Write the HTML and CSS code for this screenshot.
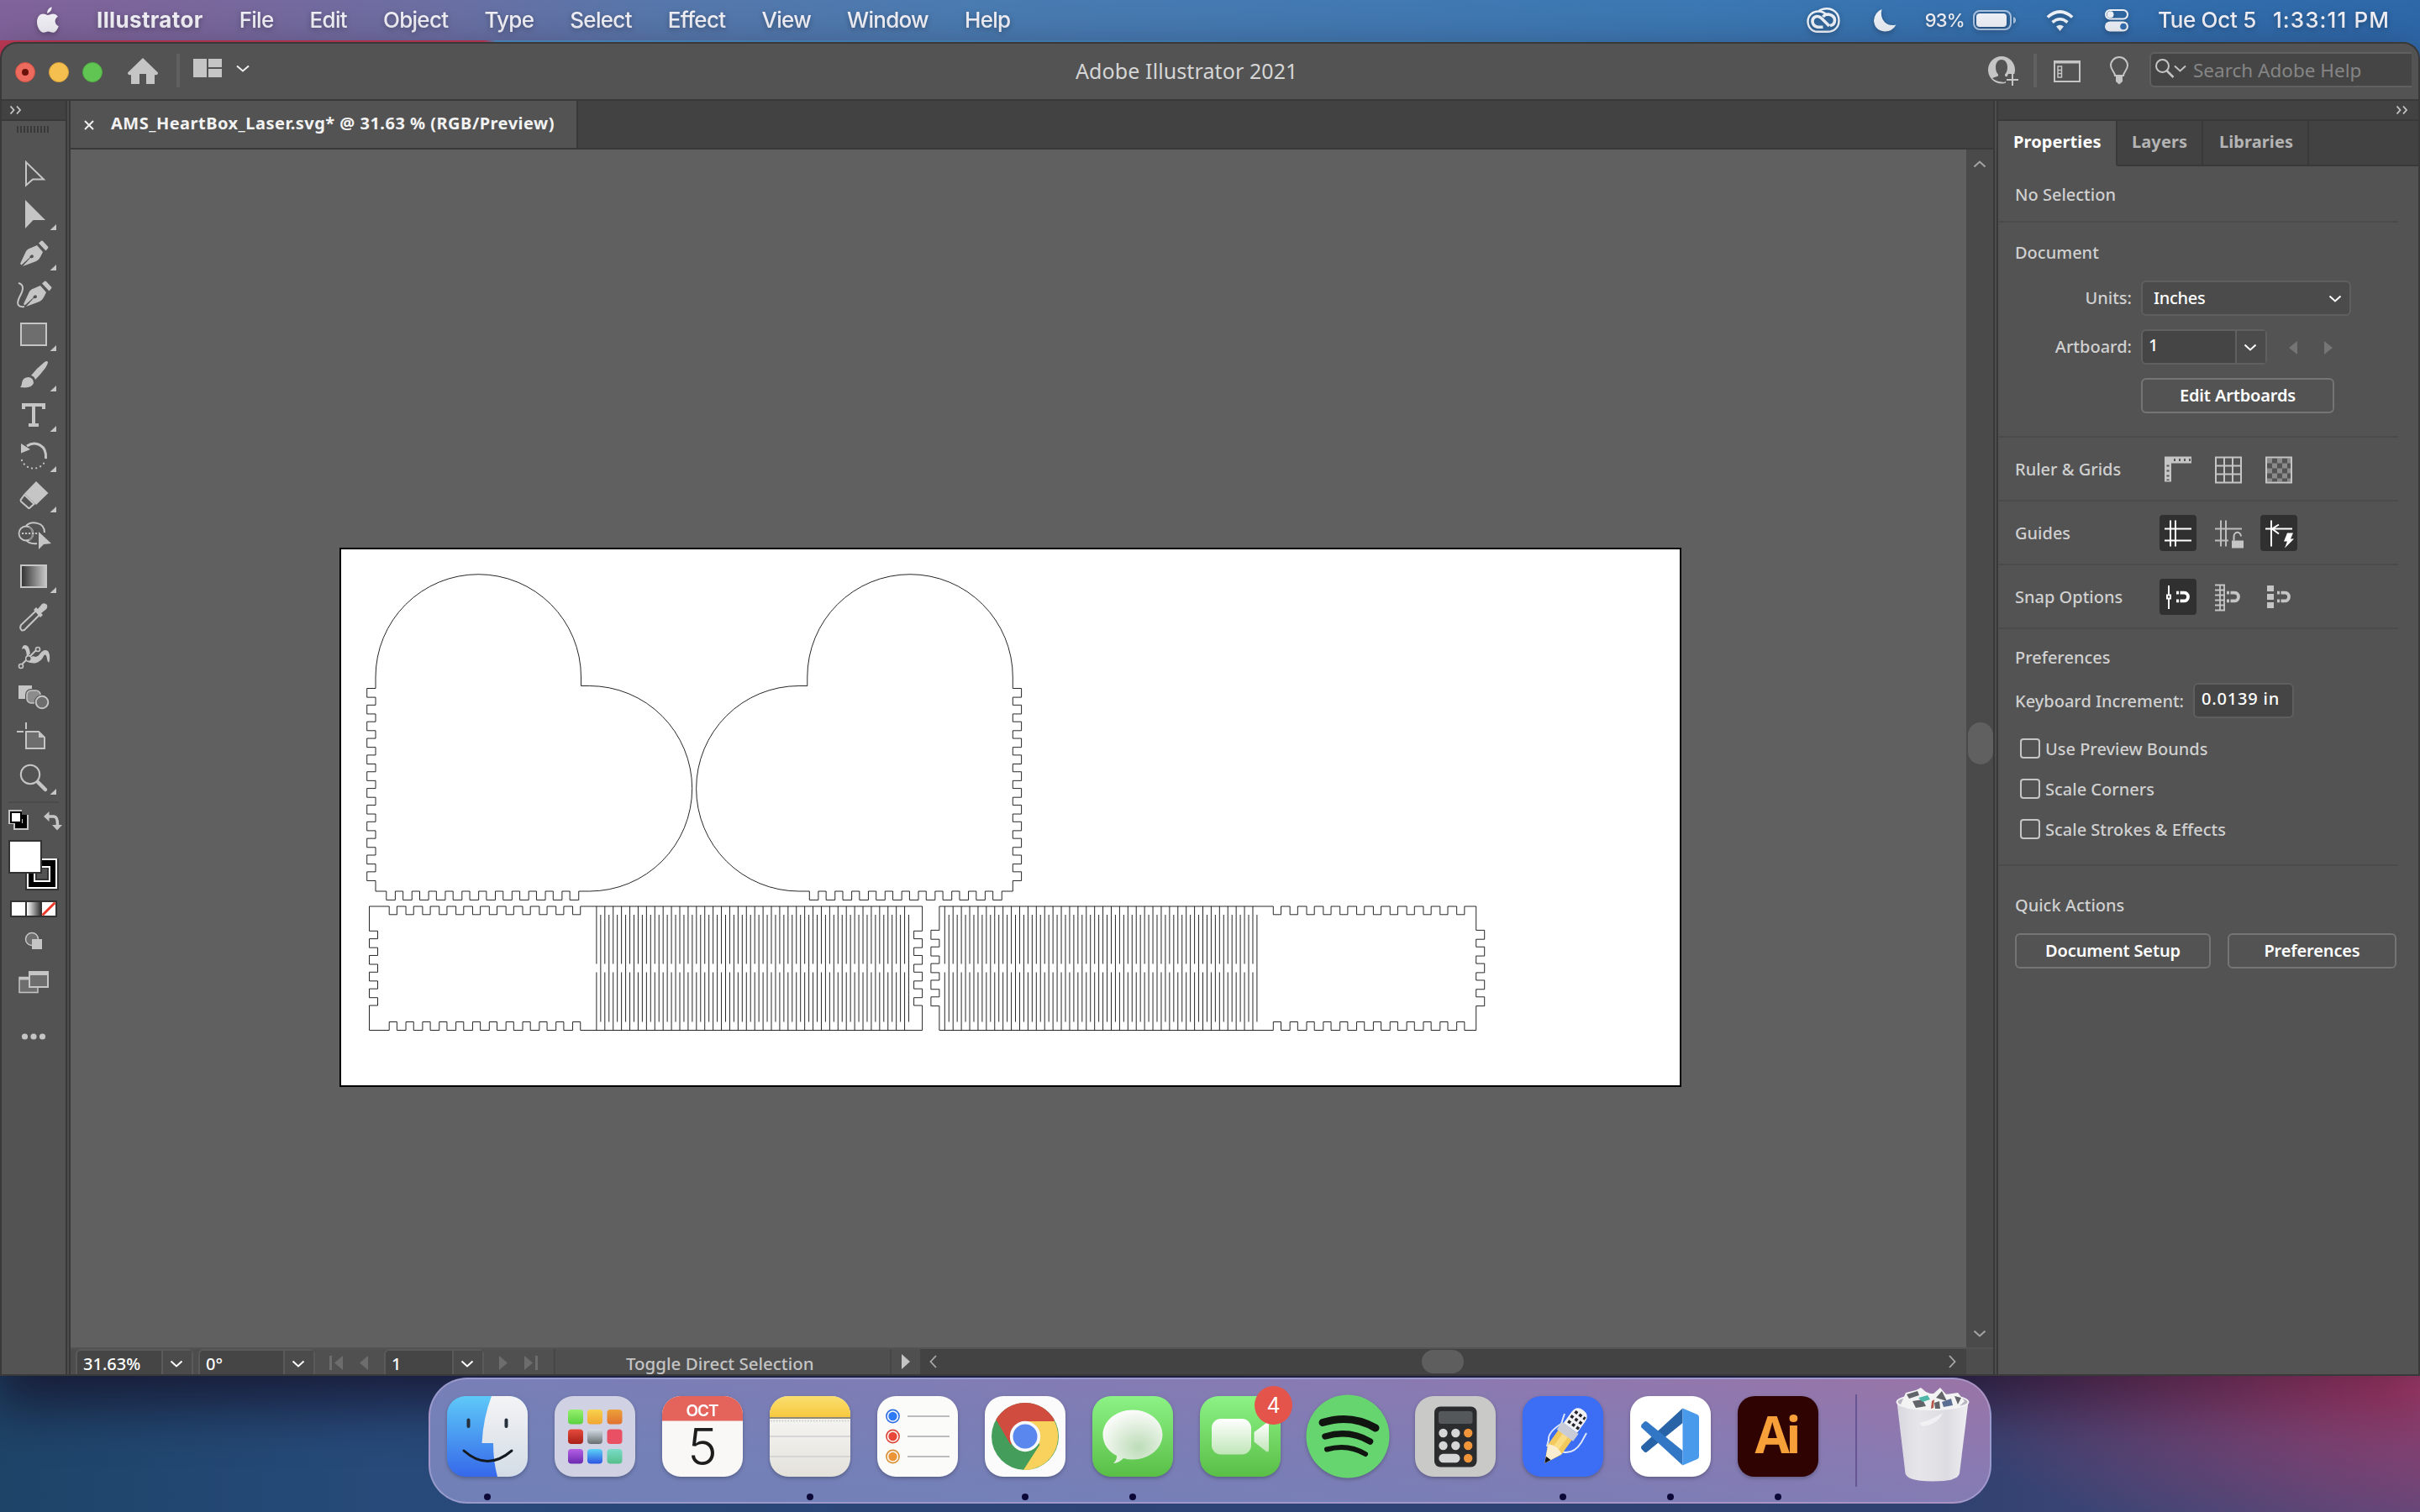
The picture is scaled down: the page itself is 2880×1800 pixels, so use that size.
FILE: index.html
```html
<!DOCTYPE html>
<html lang="en">
<head>
<meta charset="utf-8">
<title>Adobe Illustrator 2021</title>
<link rel="stylesheet" href="styles.css">
</head>
<body>
<svg class="defs" width="0" height="0">
  <defs>
    <symbol id="chev" viewBox="0 0 16 9"><path d="M1.5 1.5 8 7.5 14.5 1.5" fill="none" stroke="currentColor" stroke-width="2"/></symbol>
    <symbol id="dbl" viewBox="0 0 15 10"><path d="M1.5 .5 5.5 5 1.5 9.500M9 .5 13 5 9 9.500" fill="none" stroke="currentColor" stroke-width="1.800"/></symbol>
    <symbol id="corner" viewBox="0 0 8 8"><path d="M8 0V7H0.500Z" fill="#c5c5c5"/></symbol>
    <symbol id="nib" viewBox="0 0 38 32"><path d="M2 28 9 13Q11 10 15 9L22 6 29 14 26 20Q24 24 21 25L5 31 14 21Q18 22 18 19 17 16 14 18.500 13 20 13.500 20.500L3.500 29.500Z" fill="#c5c5c5"/><path d="M24 3.500 27 .8Q28 0 29 1L35 7.500Q36 8.500 35 9.500L32.500 12.500Z" fill="#c5c5c5"/></symbol>
    <symbol id="magnet" viewBox="0 0 17 14"><path d="M4.500 2H9a5 5 0 0 1 0 10H4.500" fill="none" stroke="currentColor" stroke-width="3.800"/><path d="M0 0h3v4H0zM0 10h3v4H0z" fill="currentColor"/></symbol>
  </defs>
</svg>

<header class="menubar">
  <svg class="apple" width="28" height="34" viewBox="0 0 28 34"><path d="M19 0C19 4 16.500 7.500 13 8 13 4 15.500 1 19 0Z"/><path d="M14 10.500C16 10.500 17.500 9 20.500 9 23 9 25.500 10.300 26.800 12.500 21.500 15.500 22.500 22.500 27.800 24.800 26 29.500 23.500 33 20.500 33 18 33 17.200 31.600 14.500 31.600 11.700 31.600 10.800 33 8.500 33 4.500 33 0 26.500 0 19.500 0 12.500 4 9 8 9 10.800 9 12.300 10.500 14 10.500Z"/></svg>
  <nav class="menus">
    <span class="app">Illustrator</span><span>File</span><span>Edit</span><span>Object</span><span>Type</span><span>Select</span><span>Effect</span><span>View</span><span>Window</span><span>Help</span>
  </nav>
  <div class="status">
    <svg class="cc" width="40" height="30" viewBox="0 0 40 30"><path d="M14 4.500Q18 1.200 24 1.200C32 1.200 38.500 7 38.500 15.500S32 28.800 25 28.800H13C6.500 28.800 1.500 23.500 1.500 16.500S7 4.500 14 4.500Q20 4.500 25 9.500" fill="none" stroke="#eef2f8" stroke-width="2.400"/><path d="M28 21.500Q33.500 20.500 33.500 15T26 8Q21.500 8 19.500 11M12 10.500Q7 11.500 7 16.500T13 23.300H19.500M12 10.500Q15 10 18 13L27 22" fill="none" stroke="#eef2f8" stroke-width="3.600"/></svg>
    <svg class="moon" width="27" height="27" viewBox="0 0 27 27"><path d="M9.500 0Q7 9 13 15.500 18.500 20.500 26.500 18.500 22 26.500 13 26.500 1 25.500 0 13.500 1 3.500 9.500 0Z" fill="#eef2f8"/></svg>
    <span class="pct">93%</span>
    <svg class="batt" width="52" height="24" viewBox="0 0 52 24"><rect x="1" y="1" width="44" height="22" rx="7" fill="none" stroke="#a9c3e0" stroke-width="2"/><rect x="4" y="4" width="36" height="16" rx="4" fill="#eef2f8"/><path d="M48 8v8q3-1 3-4t-3-4Z" fill="#a9c3e0"/></svg>
    <svg class="wifi" width="33" height="25" viewBox="0 0 33 25"><path d="M16.500 25 12 19.500Q16.500 16 21 19.500Z" fill="#eef2f8"/><path d="M7.500 14.500Q16.500 7 25.500 14.500M1.800 8.500Q16.500-4.500 31.200 8.500" fill="none" stroke="#eef2f8" stroke-width="3.600"/></svg>
    <svg class="ctl" width="28" height="27" viewBox="0 0 28 27"><rect x="1" y="1" width="26" height="10.500" rx="5.200" fill="none" stroke="#eef2f8" stroke-width="2"/><circle cx="6.500" cy="6.200" r="4" fill="#eef2f8"/><rect y="14.500" width="28" height="12" rx="6" fill="#eef2f8"/><circle cx="22" cy="20.500" r="3.800" fill="#3570ae"/></svg>
    <span class="date">Tue Oct 5</span><span class="time">1:33:11 PM</span>
  </div>
</header>

<main class="window">
  <div class="titlebar">
    <svg width="302" height="66" viewBox="2 52 302 66">
      <circle cx="30" cy="86" r="11.500" fill="#ed6a5e" stroke="#d55144"/><circle cx="30" cy="86" r="4" fill="#6b120c"/>
      <circle cx="70" cy="86" r="11.500" fill="#f5bf4f" stroke="#dba33a"/><circle cx="110" cy="86" r="11.500" fill="#61c554" stroke="#50ab43"/>
      <path d="M170 69 188 86.500Q188 90 184 89V100H174V88h-8V100H156V89Q152 90 152 86.500Z" fill="#c5c5c5"/>
      <path d="M210 64h4v40h-4z" fill="#606060"/>
      <path d="M230 70h16v22h-16zM248 70h16v10h-16zM248 82h16v10h-16z" fill="#c5c5c5"/>
      <path d="M282 78.500 289 84.500 296 78.500" fill="none" stroke="#f0f0f0" stroke-width="2"/>
    </svg>
    <h1>Adobe Illustrator 2021</h1>
    <div class="title-right">
      <svg width="170" height="66" viewBox="2366 52 170 66">
        <ellipse cx="2382" cy="83.200" rx="16" ry="16.200" fill="#c5c5c5"/>
        <path d="M2382 71C2386.500 71 2389 75 2389 80 2389 84.500 2387.500 87 2386 88.500V90.500L2393 93 2385 98 2382 97.500C2377 97 2374 95.500 2371 93L2378 90.500V88.500C2376.500 87 2375 84.500 2375 80 2375 75 2377.500 71 2382 71Z" fill="#535353"/>
        <path d="M2390 88H2404V104H2387V95Z" fill="#535353"/><path d="M2395 88v14M2388 95h14" stroke="#c5c5c5" stroke-width="2"/>
        <path d="M2420 64h4v40h-4z" fill="#606060"/>
        <path d="M2445 73h30v24h-30zM2445 74.500h30" fill="none" stroke="#c5c5c5" stroke-width="2"/><path d="M2449 79h4.500v13h-4.500zM2449 83.500h4M2449 87.500h4" fill="none" stroke="#c5c5c5" stroke-width="1.500"/>
        <path d="M2517 90C2517 86 2512 83 2512 78a10 10 0 0 1 20 0C2532 83 2527 86 2527 90Z" fill="none" stroke="#c5c5c5" stroke-width="2"/><path d="M2518 90h8v7l-4 3.500-4-3.500z" fill="#c5c5c5"/>
      </svg>
      <div class="search">
        <svg width="38" height="24" viewBox="0 0 38 24"><circle cx="9.500" cy="8.500" r="7.500" fill="none" stroke="#c5c5c5" stroke-width="2"/><path d="M14.500 14 22.500 22" stroke="#c5c5c5" stroke-width="2.500"/><path d="M24 8.500 30.500 14.500 37 8.500" fill="none" stroke="#c5c5c5" stroke-width="1.800"/></svg>
        <span>Search Adobe Help</span>
      </div>
    </div>
  </div>

  <div class="workspace">
    <aside class="tools">
      <div class="tools-head"><svg width="15" height="10"><use href="#dbl"/></svg></div>
      <div class="grip"></div>
      <svg class="tool" viewBox="2 182 76 48"><path d="M31 193V220.500L39 213.500H52Z" fill="none" stroke="#c5c5c5" stroke-width="2"/></svg>
      <svg class="tool" viewBox="2 230 76 48"><path d="M30 238V272L39.500 262H54Z" fill="#c5c5c5"/><use href="#corner" x="59" y="267" width="8" height="8"/></svg>
      <svg class="tool" viewBox="2 278 76 48"><use href="#nib" x="22" y="286" width="38" height="32"/><use href="#corner" x="59" y="315" width="8" height="8"/></svg>
      <svg class="tool" viewBox="2 326 76 48"><use href="#nib" x="26" y="334" width="38" height="32"/><path d="M22 337C30 339 27 347 23 354 19 363 22 366 29 365" fill="none" stroke="#c5c5c5" stroke-width="2"/></svg>
      <svg class="tool" viewBox="2 374 76 48"><path d="M25 385H55V411H25Z" fill="#6e6e6e" stroke="#c5c5c5" stroke-width="2"/><use href="#corner" x="59" y="411" width="8" height="8"/></svg>
      <svg class="tool" viewBox="2 422 76 48"><path d="M24 461Q26 459 26 456 27 449 34 449 40 450 40 456 38 463 24 461ZM37 447Q44 438 53 431 56 429 57 431 57 433 54 438 48 446 42 452 41 448 37 447Z" fill="#c5c5c5"/><use href="#corner" x="59" y="459" width="8" height="8"/></svg>
      <svg class="tool" viewBox="2 470 76 48"><path d="M26 480H54V487H50V484H42V504H46V508H34V504H38V484H30V487H26Z" fill="#c5c5c5"/><use href="#corner" x="59" y="507" width="8" height="8"/></svg>
      <svg class="tool" viewBox="2 518 76 48"><path d="M32 531C42 524 56 530 54.500 546" fill="none" stroke="#c5c5c5" stroke-width="3"/><path d="M25 528V539.500L36 535Z" fill="#c5c5c5"/><path d="M26 548A15 15 0 0 0 54 548" fill="none" stroke="#c5c5c5" stroke-width="2.200" stroke-linecap="round" stroke-dasharray=".1 5.200"/><use href="#corner" x="59" y="555" width="8" height="8"/></svg>
      <svg class="tool" viewBox="2 566 76 48"><path d="M43 573 57.500 587 43 601 29 587.500Z" fill="#c5c5c5"/><path d="M29 589 25 594.500Q24 595.500 25 597L33.500 604.500Q34.500 605.500 35.500 604.500L40.500 600Z" fill="none" stroke="#c5c5c5" stroke-width="2"/><use href="#corner" x="59" y="603" width="8" height="8"/></svg>
      <svg class="tool" viewBox="2 614 76 48"><path d="M31 626C37 620 53 621 53 634M31 643Q35 648 44 647" fill="none" stroke="#c5c5c5" stroke-width="2"/><circle cx="31" cy="635" r="8.500" fill="none" stroke="#c5c5c5" stroke-width="1.800"/><path d="M35 627Q43 635 35 643" fill="none" stroke="#8c8c8c" stroke-width="2"/><path d="M26 635H46" stroke="#c5c5c5" stroke-width="2.200" stroke-dasharray="2.200 1.800"/><path d="M46 633V654L52 648 61 647Z" fill="#c5c5c5"/></svg>
      <svg class="tool" viewBox="2 662 76 48"><defs><linearGradient id="gt"><stop offset="0" stop-color="#303030"/><stop offset="1" stop-color="#c8c8c8"/></linearGradient></defs><path d="M25 673H55V699H25Z" fill="url(#gt)" stroke="#c5c5c5" stroke-width="2"/><use href="#corner" x="59" y="699" width="8" height="8"/></svg>
      <svg class="tool" viewBox="2 710 76 48"><path d="M43 727 25 744Q23 748 26 750.500 29 751 31 748L47 732" fill="none" stroke="#c5c5c5" stroke-width="2"/><path d="M40 726 43 723 45 725 50 719Q53 717 56 720 57 724 54 726L49 730 51 732 48 735Z" fill="#c5c5c5"/></svg>
      <svg class="tool" viewBox="2 758 76 48"><path d="M26 773Q27 766.500 32 768.500 35 770 36 779 43 785 47 779 52 772 57 775 60.500 779 58.500 788.500 56.500 788.500 56 784 55 778 52.500 780 49 788 42 789.500 37 790 31 787.500 33 781 30.500 774 28.500 770.500 26 773Z" fill="#c5c5c5"/><path d="M26 791 44 773" stroke="#535353" stroke-width="4"/><path d="M26 791 44 773" stroke="#c5c5c5" stroke-width="2"/><circle cx="25" cy="793" r="2.500" fill="#535353" stroke="#c5c5c5" stroke-width="1.600"/><circle cx="45" cy="773" r="2.500" fill="#535353" stroke="#c5c5c5" stroke-width="1.600"/><circle cx="34" cy="784" r="3.300" fill="#535353" stroke="#c5c5c5" stroke-width="1.500"/></svg>
      <svg class="tool" viewBox="2 806 76 48"><path d="M22 816H38V832H22Z" fill="#c5c5c5"/><rect x="32" y="822" width="16" height="15" rx="5" fill="#8c8c8c" stroke="#535353" stroke-width="4"/><rect x="32" y="822" width="16" height="15" rx="5" fill="#8c8c8c" stroke="#c5c5c5" stroke-width="1.600"/><circle cx="50" cy="836" r="7.300" fill="#535353" stroke="#535353" stroke-width="4"/><circle cx="50" cy="836" r="7.300" fill="#6e6e6e" stroke="#c5c5c5" stroke-width="2"/></svg>
      <svg class="tool" viewBox="2 854 76 48"><path d="M31 860V868M20 871H28" stroke="#c5c5c5" stroke-width="2"/><path d="M31 871H46L53 878V891H31Z" fill="#6e6e6e" stroke="#c5c5c5" stroke-width="2"/><path d="M46 871V878H53Z" fill="#c5c5c5"/></svg>
      <svg class="tool" viewBox="2 902 76 48"><circle cx="36" cy="922" r="11.200" fill="none" stroke="#c5c5c5" stroke-width="2"/><path d="M45 931 54 940" stroke="#c5c5c5" stroke-width="4.500" stroke-linecap="round"/><use href="#corner" x="59" y="939" width="8" height="8"/></svg>
      <svg class="swatches" viewBox="2 950 76 300">
        <defs><linearGradient id="gs"><stop offset="0" stop-color="#fff"/><stop offset="1" stop-color="#3a3a3a"/></linearGradient></defs>
        <path d="M10 955H70" stroke="#4a4a4a" stroke-width="2"/>
        <path d="M10 964H26V970H34V988H16V981H10Z" fill="#c5c5c5"/><path d="M18 970H32V986H18Z" fill="#000"/><path d="M23 975h4v5h-4z" fill="#c5c5c5"/><path d="M13 967H25V979H13Z" fill="#fff" stroke="#000" stroke-width="2"/>
        <path d="M57 972H64Q68.500 972 68.500 982" fill="none" stroke="#c5c5c5" stroke-width="3.500"/><path d="M52 972 58.500 966V978ZM62 982H74L68 988.500Z" fill="#c5c5c5"/>
        <path d="M30 1022H70V1060H30Z" fill="#323232"/><path d="M33 1023H67V1057H33Z" fill="#000" stroke="#fff" stroke-width="2"/><path d="M41 1032H59V1049H41Z" fill="#323232" stroke="#fff" stroke-width="2"/><path d="M44 1034H56V1046H44Z" fill="#535353"/>
        <path d="M11 1001H49V1039H11Z" fill="#fff" stroke="#323232" stroke-width="2"/>
        <path d="M12 1072H68V1092H12Z" fill="#323232"/><path d="M14 1074H30V1090H14ZM50 1074H66V1090H50Z" fill="#fff"/><path d="M32 1074H48V1090H32Z" fill="url(#gs)"/><path d="M50.500 1089.500 65.500 1074.500" stroke="#e8392a" stroke-width="3"/>
        <circle cx="38" cy="1118" r="7.500" fill="#6e6e6e" stroke="#c5c5c5" stroke-width="1.500"/><path d="M38 1118h12v12h-12z" fill="#c5c5c5"/>
        <path d="M23 1163.500H45V1181.500H23Z" fill="#6e6e6e" stroke="#c5c5c5" stroke-width="1.500"/><path d="M23 1165h12" stroke="#c5c5c5" stroke-width="3"/><path d="M35 1157H57V1175H35Z" fill="#6e6e6e" stroke="#c5c5c5" stroke-width="2"/><path d="M35 1159h22" stroke="#c5c5c5" stroke-width="4"/>
        <circle cx="29.500" cy="1234" r="3.600" fill="#c5c5c5"/><circle cx="40" cy="1234" r="3.600" fill="#c5c5c5"/><circle cx="50.500" cy="1234" r="3.600" fill="#c5c5c5"/>
      </svg>
    </aside>
    <div class="seam"></div>

    <section class="document">
      <div class="doc-tabs"><div class="doc-tab"><svg width="12" height="12" viewBox="0 0 12 12"><path d="M1 1 11 11M11 1 1 11" stroke="#eee" stroke-width="2"/></svg><span>AMS_HeartBox_Laser.svg* @ 31.63 % (RGB/Preview)</span></div></div>
      <div class="stage">
        <svg class="canvas" width="2256" height="1426" viewBox="84 178 2256 1426">
          <rect x="405" y="653" width="1595" height="640" fill="#fff" stroke="#000" stroke-width="2"/>
          <g id="cuts" fill="none" stroke="#000" stroke-width=".85"></g>
        </svg>
        <div class="vscroll"><svg width="16" height="9" class="flip"><use href="#chev"/></svg><div class="vthumb"></div><svg width="16" height="9"><use href="#chev"/></svg></div>
      </div>
      <div class="statusbar">
        <div class="combo zoomf"><span>31.63%</span><i><svg width="16" height="9"><use href="#chev"/></svg></i></div>
        <div class="combo rotf"><span>0°</span><i><svg width="16" height="9"><use href="#chev"/></svg></i></div>
        <svg class="nav" width="82" height="30" viewBox="375 1606 82 30"><path d="M392 1614h3v17h-3zM408 1614V1631L398 1622.500ZM438 1614V1631L428 1622.500Z" fill="#6d6d6d"/></svg>
        <div class="combo pagef"><span>1</span><i><svg width="16" height="9"><use href="#chev"/></svg></i></div>
        <svg class="nav" width="82" height="30" viewBox="576 1606 82 30"><path d="M594 1614V1631L604 1622.500ZM624 1614V1631L634 1622.500ZM637 1614h3v17h-3z" fill="#6d6d6d"/></svg>
        <div class="hint">Toggle Direct Selection</div>
        <div class="more"><svg width="10" height="18"><path d="M0 0V18L10 9Z" fill="#c5c5c5"/></svg></div>
        <div class="hscroll"><svg width="9" height="16" viewBox="0 0 9 16"><path d="M8 1 1.500 8 8 15" fill="none" stroke="#aaa" stroke-width="1.800"/></svg><div class="hthumb"></div><svg width="9" height="16" viewBox="0 0 9 16"><path d="M1 1 7.500 8 1 15" fill="none" stroke="#aaa" stroke-width="1.800"/></svg></div>
        <div class="sizer"></div>
      </div>
    </section>
    <div class="seam"></div>

    <aside class="panel">
      <div class="panel-head"><svg width="15" height="10"><use href="#dbl"/></svg></div>
      <div class="ptabs"><span class="on">Properties</span><span>Layers</span><span>Libraries</span><b></b></div>
      <div class="sec s-sel">No Selection</div>
      <div class="sec s-doc">
        <h2>Document</h2>
        <div class="row units"><label>Units:</label><div class="select"><span>Inches</span><svg width="16" height="9"><use href="#chev"/></svg></div></div>
        <div class="row art"><label>Artboard:</label><div class="combo artf"><span>1</span><i><svg width="16" height="9"><use href="#chev"/></svg></i></div><svg class="arrows" width="54" height="16" viewBox="2723 407 54 16"><path d="M2734 407V423L2724 415ZM2766 407V423L2776 415Z" fill="#757575"/></svg></div>
        <button class="edit">Edit Artboards</button>
      </div>
      <div class="sec s-icons"><label>Ruler &amp; Grids</label>
        <svg class="ico" viewBox="0 0 44 42"><path fill-rule="evenodd" d="M6 6H38V14H14V36H6ZM17 8.500v3h2v-3zM23 8.500v3h2v-3zM29 8.500v3h2v-3zM35 8.500v3h2v-3zM8.500 16v2h3v-2zM8.500 22v2h3v-2zM8.500 28v2h3v-2zM8.500 33v1.500h3v-1.500z" fill="#c5c5c5"/></svg>
        <svg class="ico" viewBox="0 0 44 42"><path d="M7 7H37V37H7ZM17 7V37M27 7V37M7 17H37M7 27H37" fill="none" stroke="#c5c5c5" stroke-width="2"/></svg>
        <svg class="ico" viewBox="0 0 44 42"><path d="M8 8h6v6h6v6h6v6h6v6h4v4h-4v-4h-6v-6h-6v-6h-6v-6h-6zM20 8h6v6h6v6h4v6h-4v-6h-6v-6h-6zM32 8h4v6h-4zM8 20h6v6h6v6h6v4h-6v-4h-6v-6h-6zM8 32h6v4h-6z" fill="#8a8a8a"/><path d="M7 7H37V37H7Z" fill="none" stroke="#c5c5c5" stroke-width="2"/></svg>
      </div>
      <div class="sec s-icons"><label>Guides</label>
        <svg class="ico act" viewBox="0 0 44 42"><path d="M13 6V37M19 6V37M6 16H38M6 30H38" stroke="#fff" stroke-width="2"/></svg>
        <svg class="ico" viewBox="0 0 44 42"><path d="M13 6V37M19 6V37M6 16H38M6 30H22" stroke="#bdbdbd" stroke-width="2"/><path d="M26 30h14v9h-14z" fill="#c5c5c5"/><path d="M28.500 30V26a4 5 0 0 1 8.500-1" fill="none" stroke="#c5c5c5" stroke-width="2"/></svg>
        <svg class="ico act" viewBox="0 0 44 42"><path d="M13 6V37M6 16H38M22 11 14 16 22 22" fill="none" stroke="#fff" stroke-width="2"/><path d="M32 21H39L36 28H40L29 39 32 31H28Z" fill="#fff"/></svg>
      </div>
      <div class="sec s-icons"><label>Snap Options</label>
        <svg class="ico act" viewBox="0 0 44 42" color="#fff"><path d="M11 7.500V18M11 24V35.500M9 19h4v4h-4z" fill="none" stroke="#fff" stroke-width="2"/><use href="#magnet" x="20" y="14" width="17" height="14"/></svg>
        <svg class="ico" viewBox="0 0 44 42" color="#c5c5c5"><path d="M12 7V37M17 7V37M6 7H18M6 13H18M6 19H18M6 25H18M6 31H18M6 37H18" fill="none" stroke="#c5c5c5" stroke-width="1.800"/><use href="#magnet" x="20" y="14" width="17" height="14"/></svg>
        <svg class="ico" viewBox="0 0 44 42" color="#c5c5c5"><path d="M8 7.500h8v7h-8zM8 17.500h8v7h-8zM8 27.500h8v7h-8z" fill="#c5c5c5"/><use href="#magnet" x="20" y="14" width="17" height="14"/></svg>
      </div>
      <div class="sec s-pref">
        <h2>Preferences</h2>
        <div class="row key"><label>Keyboard Increment:</label><div class="field">0.0139 in</div></div>
        <div class="chk"><i></i>Use Preview Bounds</div>
        <div class="chk"><i></i>Scale Corners</div>
        <div class="chk"><i></i>Scale Strokes &amp; Effects</div>
      </div>
      <div class="quick"><h2>Quick Actions</h2><div class="row"><button class="setup">Document Setup</button><button class="prefs">Preferences</button></div></div>
    </aside>
  </div>
</main>

<footer class="desktop">
  <div class="dock">
    <div class="appicon run"><svg viewBox="0 0 96 96"><defs><linearGradient id="f1" x2="0" y2="1"><stop offset="0" stop-color="#5ec9f8"/><stop offset="1" stop-color="#3668ea"/></linearGradient><linearGradient id="f2" x2="0" y2="1"><stop offset="0" stop-color="#f4f4f5"/><stop offset="1" stop-color="#d3dce6"/></linearGradient><clipPath id="sq"><rect width="96" height="96" rx="22"/></clipPath></defs><g clip-path="url(#sq)"><path d="M0 0h96v96H0z" fill="url(#f1)"/><path d="M53 0Q43 26 41.500 56H55Q55 78 60 96H96V0Z" fill="url(#f2)"/><path d="M25.500 28.500v7.500M70.500 28.500v7.500" stroke="#26303c" stroke-width="4" stroke-linecap="round"/><path d="M20 65Q48 90 77 65" fill="none" stroke="#14181f" stroke-width="3" stroke-linecap="round"/></g></svg></div>
    <div class="appicon"><svg viewBox="0 0 96 96"><defs><linearGradient id="l1" x2="0" y2="1"><stop offset="0" stop-color="#95f06b"/><stop offset="1" stop-color="#5bd142"/></linearGradient><linearGradient id="l2" x2="0" y2="1"><stop offset="0" stop-color="#f8d34d"/><stop offset="1" stop-color="#f1a531"/></linearGradient><linearGradient id="l3" x2="0" y2="1"><stop offset="0" stop-color="#eca23b"/><stop offset="1" stop-color="#e0702f"/></linearGradient><linearGradient id="l4" x2="0" y2="1"><stop offset="0" stop-color="#e64b3c"/><stop offset="1" stop-color="#a81f17"/></linearGradient><linearGradient id="l5" x2="0" y2="1"><stop offset="0" stop-color="#d4dde4"/><stop offset="1" stop-color="#666e70"/></linearGradient><linearGradient id="l7" x2="0" y2="1"><stop offset="0" stop-color="#b45fe6"/><stop offset="1" stop-color="#6c2aae"/></linearGradient><linearGradient id="l8" x2="0" y2="1"><stop offset="0" stop-color="#5cd3f7"/><stop offset="1" stop-color="#2c53e2"/></linearGradient><linearGradient id="l9" x2="0" y2="1"><stop offset="0" stop-color="#7bdcc9"/><stop offset="1" stop-color="#55bf8a"/></linearGradient></defs><rect width="96" height="96" rx="22" fill="#d0d2e3"/><rect x="16" y="16" width="18" height="17.500" rx="4" fill="url(#l1)"/><rect x="39" y="16" width="18" height="17.500" rx="4" fill="url(#l2)"/><rect x="62.500" y="16" width="18" height="17.500" rx="4" fill="url(#l3)"/><rect x="16" y="39.500" width="18" height="17.500" rx="4" fill="url(#l4)"/><rect x="39" y="39.500" width="18" height="17.500" rx="4" fill="url(#l5)"/><rect x="62.500" y="39.500" width="18" height="17.500" rx="4" fill="#ea5064"/><rect x="16" y="63" width="18" height="17.500" rx="4" fill="url(#l7)"/><rect x="39" y="63" width="18" height="17.500" rx="4" fill="url(#l8)"/><rect x="62.500" y="63" width="18" height="17.500" rx="4" fill="url(#l9)"/></svg></div>
    <div class="appicon"><svg viewBox="0 0 96 96"><g clip-path="url(#sq)"><path d="M0 0h96v96H0z" fill="#f9f8f7"/><path d="M0 0h96v29.500H0z" fill="#e4635a"/></g><text x="48" y="23.500" font-size="19" font-weight="600" fill="#fff" text-anchor="middle" textLength="39">OCT</text><text x="48" y="81.500" font-size="60" font-weight="300" fill="#1d1d1d" text-anchor="middle">5</text></svg></div>
    <div class="appicon run"><svg viewBox="0 0 96 96"><defs><linearGradient id="n1" x2="0" y2="1"><stop offset="0" stop-color="#fadf6f"/><stop offset="1" stop-color="#f6c83f"/></linearGradient><linearGradient id="n2" x2="0" y2="1"><stop offset="0" stop-color="#fbfbfa"/><stop offset="1" stop-color="#e3e1da"/></linearGradient></defs><g clip-path="url(#sq)"><path d="M0 0h96v96H0z" fill="url(#n2)"/><path d="M0 0h96v25H0z" fill="url(#n1)"/><path d="M0 26h96" stroke="#8f8a78" stroke-width="2"/><path d="M1 29.500h96" stroke="#c3c2be" stroke-width="1.600" stroke-dasharray="1.600 1.800"/><path d="M0 48h96M0 72h96" stroke="#d0cfd2" stroke-width="1.500"/></g></svg></div>
    <div class="appicon"><svg viewBox="0 0 96 96"><rect width="96" height="96" rx="22" fill="#fbfbfa"/><g fill="none" stroke-width="1.600"><circle cx="18.500" cy="24" r="7.600" stroke="#2f6fe4"/><circle cx="18.500" cy="48" r="7.600" stroke="#dc4638"/><circle cx="18.500" cy="72" r="7.600" stroke="#d98f33"/></g><circle cx="18.500" cy="24" r="5.200" fill="#2f7bf6"/><circle cx="18.500" cy="48" r="5.200" fill="#e8483a"/><circle cx="18.500" cy="72" r="5.200" fill="#ec9537"/><path d="M36 24H86M36 48H86M36 72H86" stroke="#a7a7ab" stroke-width="1.600"/></svg></div>
    <div class="appicon run"><svg viewBox="0 0 96 96"><rect width="96" height="96" rx="22" fill="#fbfbfc"/><circle cx="48" cy="48" r="40" fill="#459d5b"/><path d="M13.360 28 30.700 58 48 30H82.640V28A40 40 0 0 0 13.360 28Z" fill="#cf4c3e"/><path d="M82.900 30A40 40 0 0 1 46 88L65.300 58 48 30Z" fill="#f8d25c"/><circle cx="48" cy="48" r="18.200" fill="#f6f8fb"/><circle cx="48" cy="48" r="14.500" fill="#5a87ee"/></svg></div>
    <div class="appicon run"><svg viewBox="0 0 96 96"><defs><linearGradient id="g1" x2="0" y2="1"><stop offset="0" stop-color="#8cf285"/><stop offset="1" stop-color="#5abf47"/></linearGradient><radialGradient id="g2" cx=".6" cy=".7" r=".7"><stop offset="0" stop-color="#bddcb8"/><stop offset="1" stop-color="#fbfcfa"/></radialGradient></defs><rect width="96" height="96" rx="22" fill="url(#g1)"/><path d="M48 16.500C67.500 16.500 83.500 29.500 83.500 46S67.500 75.500 48 75.500Q42 75.500 37 74 32 79.500 25 80 29.500 76 29 71C19 66 12.500 57 12.500 46 12.500 29.500 28.500 16.500 48 16.500Z" fill="url(#g2)"/></svg></div>
    <div class="appicon"><svg viewBox="0 0 96 96"><defs><linearGradient id="g3" x2="0" y2="1"><stop offset="0" stop-color="#fff"/><stop offset="1" stop-color="#c0e6b8"/></linearGradient></defs><rect width="96" height="96" rx="22" fill="url(#g1)"/><rect x="14" y="27" width="47" height="42.500" rx="11" fill="url(#g3)"/><path d="M64.500 43 79 32Q82 30.500 82 34V64Q82 67.500 79 66L64.500 54.500Z" fill="url(#g3)"/></svg><b class="badge">4</b></div>
    <div class="appicon"><svg viewBox="0 0 96 96" overflow="visible"><circle cx="48" cy="48" r="49.500" fill="#66d56f"/><path d="M18 31.500Q52 21 81 38" fill="none" stroke="#101510" stroke-width="9" stroke-linecap="round"/><path d="M21 48Q50 39.500 74.500 54" fill="none" stroke="#101510" stroke-width="7.500" stroke-linecap="round"/><path d="M23 63.500Q48 56.500 69 69" fill="none" stroke="#101510" stroke-width="6" stroke-linecap="round"/></svg></div>
    <div class="appicon"><svg viewBox="0 0 96 96"><rect width="96" height="96" rx="22" fill="#c9c9c8"/><rect x="23" y="12.500" width="50.500" height="72" rx="7" fill="#2b2c2e"/><rect x="28" y="18" width="40.500" height="15" rx="3" fill="#55585b"/><g fill="#d6d6d6"><circle cx="33.500" cy="44" r="5.200"/><circle cx="48.300" cy="44" r="5.200"/><circle cx="33.500" cy="59" r="5.200"/><circle cx="48.300" cy="59" r="5.200"/><rect x="28.300" y="68.800" width="25.200" height="10.400" rx="5.200"/></g><g fill="#f0953a"><circle cx="63.200" cy="44" r="5.200"/><circle cx="63.200" cy="59" r="5.200"/><circle cx="63.200" cy="74" r="5.200"/></g></svg></div>
    <div class="appicon run"><svg viewBox="0 0 96 96"><rect width="96" height="96" rx="22" fill="#3b6df5"/><path d="M50 21 46 33Q30 43 31 52L29 60M76 44 70 55Q62 68 50 67L46 66" fill="none" stroke="#dde6fa" stroke-width="2"/><g transform="translate(1 -1) rotate(36 48 48)"><path d="M39 46H59V68L49 88 39 68Z" fill="#f3c95c"/><path d="M45.500 46H53V68H45.500Z" fill="#f9dc84"/><path d="M39 67Q49 62 59 67L49 88Z" fill="#fbeed0"/><path d="M45.500 80.500H52.500L49 88Z" fill="#15161a"/><path d="M37 36H61V47H37Z" fill="#c9ccd6"/><path d="M39 36V20Q39 10 49 10T59 20V36Z" fill="#f2f2f4"/><path d="M42 17H57M41 24H58M42 31H58" stroke="#23242a" stroke-width="3.600" stroke-dasharray="3.600 2.600"/></g></svg></div>
    <div class="appicon run"><svg viewBox="0 0 96 96"><rect width="96" height="96" rx="22" fill="#fff"/><path d="M62.500 14.500V32L20 66.500Q18.500 67.500 17 66.500L13.500 63Q12.500 61 13.500 59.500Z" fill="#2763a6"/><path d="M62.500 82.500V65L20 30.500Q18.500 29.500 17 30.500L13.500 34Q12.500 36 13.500 37.500Z" fill="#3277c5"/><path d="M62.500 14.500 80 22Q82 23 82 25V72Q82 74 80 75L62.500 82.500Z" fill="#4a9aec"/></svg></div>
    <div class="appicon run"><svg viewBox="0 0 96 96"><rect width="96" height="96" rx="20" fill="#2e0302"/><text class="ai" x="48" y="68" font-size="60" font-weight="700" fill="#f79f38" text-anchor="middle" textLength="55">Ai</text></svg></div>
    <div class="sep"></div>
    <svg class="trash" width="88" height="114" viewBox="2256 1650 88 114"><defs><linearGradient id="t1"><stop offset="0" stop-color="#d9d8e0"/><stop offset=".3" stop-color="#e6e6ea"/><stop offset=".7" stop-color="#dcdce2"/><stop offset="1" stop-color="#efeef2"/></linearGradient></defs><path d="M2257.500 1669 2267.500 1754Q2270 1763.500 2300 1763.500T2332 1754L2342.500 1669Z" fill="url(#t1)"/><ellipse cx="2300" cy="1669" rx="42.500" ry="9" fill="#b9b6c2" stroke="#f4f3f6" stroke-width="2"/><path d="M2262 1672 2268 1658 2280 1655 2286 1652 2292 1657 2300 1660 2309 1652 2316 1660 2330 1658 2338 1668 2330 1676 2300 1679 2270 1677Z" fill="#f3f3f3"/><path d="M2269 1660 2282 1656 2284 1661 2272 1665ZM2276 1668 2288 1666 2292 1674 2280 1676ZM2304 1664 2311 1656 2317 1668ZM2326 1662 2334 1664 2330 1672ZM2302 1670 2308 1668 2309 1677 2303 1677Z" fill="#63646a"/><path d="M2283 1664 2294 1661 2297 1666 2288 1669Z" fill="#4fb7a8"/><path d="M2311 1669 2322 1665 2324 1673 2313 1675Z" fill="#5b6f94"/><path d="M2299 1668 2302 1666 2301 1676 2298 1677Z" fill="#b4574a"/><path d="M2284 1694Q2300 1690 2312 1682 2306 1696 2288 1698Z" fill="#f1f1f4"/></svg>
  </div>
</footer>
<script src="cuts.js"></script>
</body>
</html>
```
FILE: cuts.js
```js
// Builds the finger joints and living-hinge cuts of the heart box.
const PITCH = 19.85;
const rep = (n, fn) => Array.from({ length: n }, (_, i) => fn(i)).join('');

// Teeth along a horizontal edge, left to right; depth is signed (down is positive).
const teethH = (x, y, n, width, depth) =>
  rep(n, i => `H${x + i * PITCH}v${depth}h${width}V${y}`);
// Teeth along a vertical edge, top to bottom; depth is signed (right is positive).
const teethV = (x, y, n, height, depth) =>
  rep(n, i => `V${y + i * PITCH}h${depth}v${height}H${x}`);

function heart(edge, dir, firstTooth) {
  const inner = edge + dir * 244.5, arc = dir > 0 ? 1 : 0;
  const side = `M${edge} 806${teethV(edge, 819.5, 12, 10.6, -dir * 10.3)}V1061`;
  const lobes = `M${edge} 806A122.250 122.250 0 0 ${arc} ${inner} 806V816.500H${inner + dir * 10}` +
    `A122.250 122.250 0 0 ${arc} ${inner + dir * 10} 1061`;
  const x0 = Math.min(edge, inner + dir * 10), x1 = Math.max(edge, inner + dir * 10);
  return side + lobes + `M${x0} 1061${teethH(firstTooth, 1061, 12, 10.6, 10.4)}H${x1}`;
}

function strip(x0, x1, notchX, toothY, toothH, leftDepth, rightDepth) {
  return `M${x0} 1079${teethH(notchX, 1079, 12, 9.2, 9.8)}H${x1}` +
    `M${x0} 1226.500${teethH(notchX, 1226.5, 12, 9.2, -10)}H${x1}` +
    `M${x0} 1079${teethV(x0, toothY, 5, toothH, leftDepth)}V1226.500` +
    `M${x1} 1079${teethV(x1, toothY, 5, toothH, rightDepth)}V1226.500`;
}

const hinge = x => rep(38, i => {
  const a = x + i * 9.91, b = a + 4.95;
  return `M${a} 1079V1147.500M${a} 1157.500V1226.500M${b} 1089V1216.500`;
});

const paths = [
  heart(447, 1, 459.8),
  heart(1205.3, -1, 963.3),
  strip(439.5, 1097.6, 463.2, 1108.3, 9.3, 10, -10),
  strip(1117.9, 1756.7, 1515.3, 1107.4, 10.8, -10, 10),
  hinge(709.9),
  hinge(1124.3)
];
document.getElementById('cuts').innerHTML = paths.map(d => `<path d="${d}"/>`).join('');
```
FILE: styles.css
```css
* { box-sizing: border-box; }
svg { display: block; flex: none; }
.defs { position: absolute; }
body {
  margin: 0; width: 2880px; height: 1800px; overflow: hidden;
  display: flex; flex-direction: column;
  font-family: "Noto Sans", sans-serif; font-size: 20px; font-weight: 500; color: #d0d0d0;
  background:
    linear-gradient(90deg, #c23a56 0, #c23a56 576px, #4d93c8 590px, #2f6bab 100%) 0 0 / 100% 90px no-repeat,
    linear-gradient(90deg, #1e4468 0, #274a7a 16%, #2d4376 45%, #2f4170 80%, #454878 92%, #5a4a7c 100%);
}

/* Menu bar */
.menubar {
  height: 48px; flex: none; display: flex; align-items: center; padding: 0 37px 0 44px;
  background: linear-gradient(90deg, #80639a 0, #7a679c 8%, #6c6fa3 18%, #5777ab 27%, #4a7bb1 40%, #3c78b3 70%, #2e68a9 100%);
  font: 500 26px/48px Inter, sans-serif; color: #f1f0f6;
}
.menubar svg, .menus, .pct, .date, .time { filter: drop-shadow(0 2px 3px rgba(0,0,0,.3)); }
.apple { fill: #f1f0f6; width: 26px; height: 32px; }
.menus { display: flex; gap: 43px; margin-left: 45px; letter-spacing: -.7px; }
.menus .app { font-weight: 700; letter-spacing: .35px; }
.status { display: flex; align-items: center; margin-left: auto; }
.cc { margin-right: -1px; }
.moon { margin-left: 41px; }
.pct { font-size: 22px; letter-spacing: -.8px; margin-left: 34px; }
.batt { margin-left: 10px; }
.wifi { margin-left: 35px; }
.ctl { margin-left: 37px; }
.date { margin-left: 35px; letter-spacing: -.3px; }
.time { margin-left: 20px; letter-spacing: 1.1px; margin-right: -1px; }

/* Window frame */
.window {
  margin-top: 2px; height: 1588px; flex: none; display: flex; flex-direction: column;
  border: 2px solid #393939; border-radius: 20px 20px 0 0; background: #535353; overflow: hidden;
  position: relative; z-index: 1; box-shadow: 0 30px 60px 6px rgba(20,5,25,.62);
}
.titlebar { height: 68px; flex: none; display: flex; border-bottom: 2px solid #393939; }
.titlebar h1 { margin: 0 0 0 976px; font-size: 25px; font-weight: 400; line-height: 65px; letter-spacing: .1px; color: #d6d6d6; }
.title-right { display: flex; margin-left: auto; padding-right: 8px; }
.search {
  margin: 10px 0 0 22px; width: 312px; height: 42px; display: flex; align-items: center; gap: 8px; padding-left: 4px;
  background: #454545; border: 2px solid #606060; border-right: 0; border-radius: 6px 0 0 6px;
}
.search svg { margin-top: -3px; }
.search span { font-size: 22.500px; font-weight: 400; color: #858585; white-space: nowrap; }

.workspace { flex: 1; display: flex; min-height: 0; }
.seam { width: 6px; border: solid #393939; border-width: 0 2px; background: #4d4d4d; }

/* Toolbar */
.tools { width: 76px; display: flex; flex-direction: column; }
.tools-head, .panel-head { height: 24px; flex: none; background: #424242; border-bottom: 2px solid #393939; display: flex; align-items: center; color: #c5c5c5; }
.tools-head { padding: 0 0 0 9px; }
.grip { width: 38px; height: 8px; margin: 6px 0 24px 18px; background: repeating-linear-gradient(90deg, #3a3a3a 0 2px, #535353 2px 4px); }
.tool { width: 76px; height: 48px; }
.swatches { width: 76px; height: 300px; }

/* Document */
.document { width: 2288px; display: flex; flex-direction: column; }
.doc-tabs { height: 58px; flex: none; background: #424242; border-bottom: 2px solid #393939; display: flex; }
.doc-tab { width: 604px; background: #535353; border-right: 2px solid #393939; display: flex; align-items: center; gap: 20px; padding: 0 0 0 16px; color: #f2f2f2; font-weight: 700; letter-spacing: .49px; white-space: nowrap; }
.doc-tab svg { margin-top: 1px; }
.doc-tab span { line-height: 52px; margin-top: -2px; }
.stage { display: flex; height: 1426px; }
.canvas { background: #606060; }
.vscroll { width: 32px; background: #4a4a4a; display: flex; flex-direction: column; align-items: center; padding: 13px 0 12px; color: #a5a5a5; }
.vscroll .flip { transform: scaleY(-1); }
.vthumb { width: 30px; height: 50px; margin: 660px 0 auto 2px; border-radius: 15px; background: #606060; }
.statusbar { height: 32px; display: flex; background: #4d4d4d; border-top: 2px solid #535353; }
.combo { display: flex; background: #454545; border: 2px solid #606060; border-radius: 6px; color: #fff; }
.combo span { flex: 1; padding-left: 7px; }
.combo i { width: 36px; border-left: 2px solid #606060; background: #4b4b4b; display: flex; align-items: center; justify-content: center; padding-right: 3px; }
.statusbar .combo { height: 30px; border-radius: 6px 6px 0 0; border-color: #5a5a5a; border-bottom: 0; line-height: 24px; padding: 0; }
.statusbar .combo span { padding-top: 4px; }
.statusbar .combo i { border-color: #5a5a5a; padding-top: 3px; }
.zoomf { width: 140px; margin-left: 6px; }
.rotf { width: 139px; margin-left: 6px; }
.nav { background: #505050; }
.pagef { width: 119px; }
.hint { width: 402px; border: solid #474747; border-width: 0 2px; background: #4f4f4f; font-size: 20.500px; line-height: 26px; padding: 4px 0 0 84px; margin-left: 1px; color: #c4c4c4; white-space: nowrap; }
.more { width: 34px; background: #4f4f4f; display: flex; align-items: center; padding: 0 0 0 12px; }
.hscroll { flex: 1; background: #434343; display: flex; align-items: center; padding: 0 12px 0 11px; }
.hscroll svg { margin-bottom: 1px; }
.hthumb { width: 50px; height: 28px; border-radius: 14px; background: #5e5e5e; margin: 0 auto 0 577px; }
.sizer { width: 32px; background: #4d4d4d; }

/* Properties panel */
.panel { width: 500px; display: flex; flex-direction: column; }
.panel-head { justify-content: flex-end; padding-right: 12px; }
.ptabs { display: flex; height: 54px; flex: none; font-weight: 700; line-height: 50px; color: #b4b4b4; letter-spacing: .1px; }
.ptabs > * { background: #424242; border: solid #393939; border-width: 0 2px 2px 0; padding-left: 17px; }
.ptabs span:nth-child(2) { width: 102px; }
.ptabs span:nth-child(3) { width: 126px; padding-left: 19px; }
.ptabs .on { width: 142px; background: linear-gradient(#535353, #535353) padding-box; border-bottom-color: #535353; padding-left: 18px; color: #fff; }
.ptabs b { flex: 1; border-right: 0; }
.sec { width: 476px; flex: none; border-bottom: 2px solid #4b4b4b; padding-left: 20px; }
.sec h2, .quick h2 { font: inherit; margin: 0; line-height: 28px; }
.s-sel { height: 67px; line-height: 68px; }
.s-doc { height: 256px; padding-top: 22px; }
.row { display: flex; }
.row label { text-align: right; }
.s-doc .row label { width: 140px; padding-right: 1px; margin-right: 10px; }
.s-doc .row { height: 42px; line-height: 42px; }
.units { margin-top: 19px; }
.s-doc .units .select { line-height: 40px; }
.art { margin-top: 16px; }
.select { width: 250px; display: flex; justify-content: space-between; align-items: center; background: #4b4b4b; border: 2px solid #5f5f5f; border-radius: 6px; color: #fff; padding: 0 9px 0 13px; letter-spacing: -.3px; }
.artf { width: 150px; line-height: 33px; }
.arrows { margin: 14px 0 0 25px; }
button { font: 600 20px "Noto Sans", sans-serif; letter-spacing: -.15px; color: #fff; background: #535353; border: 2px solid #757575; border-radius: 6px; padding: 0 0 1px; }
.edit { width: 230px; height: 42px; margin: 16px 0 0 150px; }
.s-icons { height: 76px; display: flex; align-items: center; }
.s-icons label { width: 172px; }
.ico { width: 44px; height: 43px; margin-right: 16px; border-radius: 4px; }
.act { background: #303030; }
.s-pref { height: 282px; padding-top: 20px; }
.key { margin-top: 18px; }
.key label { line-height: 40px; }
.field { width: 120px; height: 42px; margin-left: 11px; margin-top: -2px; background: #454545; border: 2px solid #5f5f5f; border-radius: 6px; color: #fff; padding-left: 8px; line-height: 33px; letter-spacing: .8px; white-space: nowrap; }
.chk { display: flex; align-items: center; height: 48px; padding-left: 6px; gap: 6px; }
.key + .chk { margin-top: 12px; }
.chk i { width: 24px; height: 24px; border: 2px solid #c5c5c5; border-radius: 4px; }
.quick { padding: 33px 0 0 20px; }
.quick .row { margin-top: 19px; gap: 20px; }
.setup { width: 233px; height: 42px; }
.prefs { width: 201px; height: 42px; }

/* Desktop and dock */
.desktop {
  flex: 1; display: flex; justify-content: center; position: relative; z-index: 2;
  background: radial-gradient(600px 190px at 100% 10%, rgba(190,50,95,.6), transparent);
}
.dock {
  width: 1860px; height: 150px; margin-top: 2px; border: 2px solid rgba(190,180,225,.5); border-radius: 46px;
  padding: 20px 0 0 20px; display: flex; gap: 32px;
  background: linear-gradient(8deg, #7080b6 0, #7480b8 25%, #7d7db5 50%, #8a7ab2 75%, #9a74a6 100%);
}
.appicon { width: 96px; height: 96px; position: relative; flex: none; font-family: Inter, sans-serif; }
.appicon svg { width: 96px; height: 96px; overflow: visible; filter: drop-shadow(0 2px 2px rgba(0,0,0,.25)); }
.appicon .ai { font-family: "Open Sans", sans-serif; }
.run::after { content: ""; position: absolute; left: 44px; top: 116px; width: 8px; height: 8px; border-radius: 50%; background: #0c0838; }
.badge { position: absolute; left: 65px; top: -12px; width: 45px; height: 46px; border-radius: 50%; background: #e5544a; color: #fff; font: 400 25px/46px Inter, sans-serif; text-align: center; }
.sep { width: 2px; height: 110px; margin: -2px 0 0 12px; background: #665493; }
.trash { margin: -12px 0 0 14px; }
```
